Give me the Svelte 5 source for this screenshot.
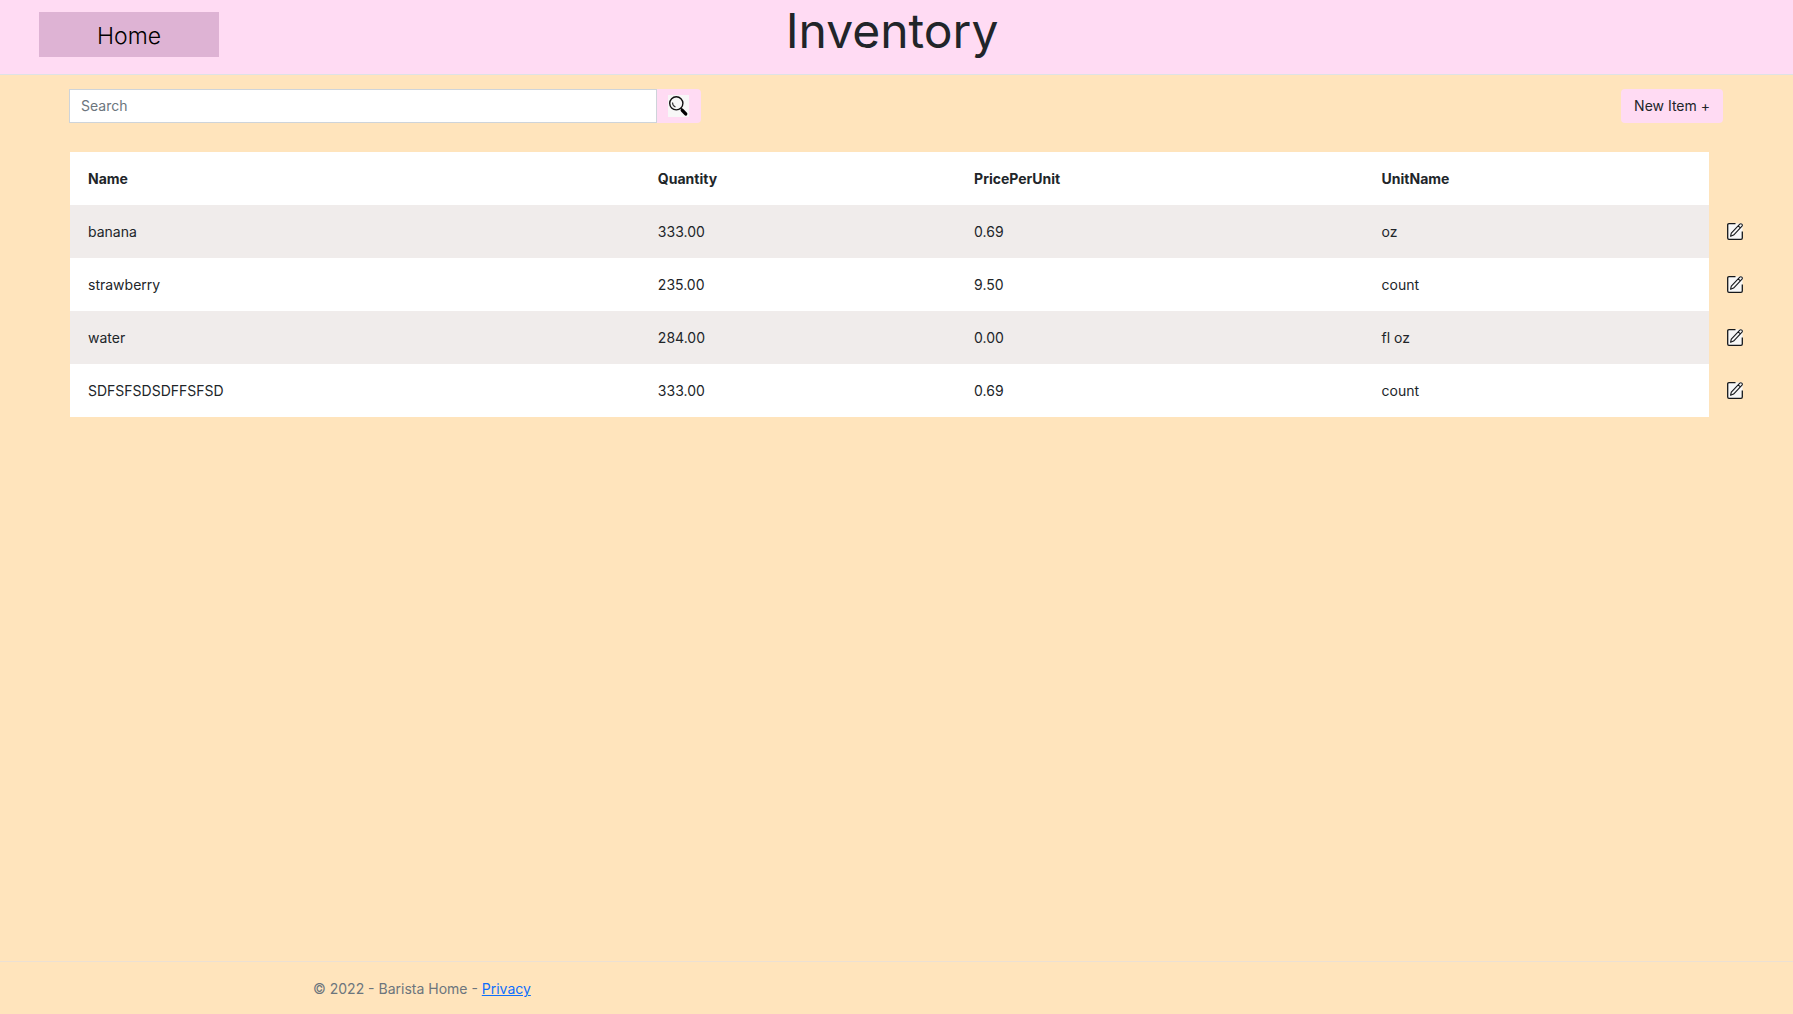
<script>
  let query = $state('');

  const items = [
    { name: 'banana', quantity: '333.00', price: '0.69', unit: 'oz' },
    { name: 'strawberry', quantity: '235.00', price: '9.50', unit: 'count' },
    { name: 'water', quantity: '284.00', price: '0.00', unit: 'fl oz' },
    { name: 'SDFSFSDSDFFSFSD', quantity: '333.00', price: '0.69', unit: 'count' }
  ];
</script>

<div class="page">
  <header>
    <a class="home" href="#home">Home</a>
    <h1>Inventory</h1>
  </header>

  <main>
    <div class="toolbar">
      <form class="search" onsubmit={(e) => e.preventDefault()}>
        <input type="text" placeholder="Search" aria-label="Search" bind:value={query} />
        <button type="submit" aria-label="Run search">
          <svg width="21" height="22" viewBox="0 0 21 22" aria-hidden="true">
            <rect width="21" height="22" fill="#f7f7f7" />
            <circle cx="8.3" cy="8.3" r="6.6" fill="none" stroke="#111" stroke-width="1.4" />
            <path d="M4.5 7.6q0 3.3 3 4.5" fill="none" stroke="#333" stroke-width="1.1" />
            <path d="M12.5 13l2 2" stroke="#111" stroke-width="1.6" />
            <path d="M14.3 15.3l3.4 3.6" stroke="#000" stroke-width="3.4" stroke-linecap="round" />
          </svg>
        </button>
      </form>
      <button type="button" class="new">New Item +</button>
    </div>

    <table>
      <colgroup>
        <col class="c-name" />
        <col class="c-quantity" />
        <col class="c-price" />
        <col />
        <col class="c-edit" />
      </colgroup>
      <thead>
        <tr>
          <th scope="col">Name</th>
          <th scope="col">Quantity</th>
          <th scope="col">PricePerUnit</th>
          <th scope="col">UnitName</th>
          <td class="edit"></td>
        </tr>
      </thead>
      <tbody>
        {#each items as item}
          <tr>
            <td>{item.name}</td>
            <td>{item.quantity}</td>
            <td>{item.price}</td>
            <td>{item.unit}</td>
            <td class="edit">
              <button type="button" aria-label="Edit {item.name}">
                <svg width="16" height="17" viewBox="0 0 16 17" aria-hidden="true">
                  <rect x="0.5" y="0.5" width="15" height="16" rx="1" fill="#f7f7f7" />
                  <path d="M8.5.7H2Q.7.7.7 2v13q0 1.3 1.3 1.3h12q1.3 0 1.3-1.3V8.5" fill="none" stroke="#16181b" stroke-width="1.3" />
                  <path d="M3.6 13.2l.7-3.1 8.5-9q1-.8 2 0t.2 2L6.6 12.1zM11.2 2.8l2.2 2" fill="#f7f7f7" stroke="#16181b" stroke-width="1.1" stroke-linejoin="round" />
                </svg>
              </button>
            </td>
          </tr>
        {/each}
      </tbody>
    </table>
  </main>

  <footer>&copy; 2022 - Barista Home - <a href="#privacy">Privacy</a></footer>
</div>

<style>
  :global(body) {
    margin: 0;
    background: #ffe4bc;
  }
  .page,
  .page * {
    box-sizing: border-box;
  }
  .page {
    display: flex;
    flex-direction: column;
    min-height: 100vh;
    overflow-x: hidden;
    color: #212529;
    font: 400 14px/21px Inter, sans-serif;
  }
  button,
  input {
    font: inherit;
    color: inherit;
  }
  button {
    border: 0;
    cursor: pointer;
  }
  svg {
    display: block;
  }
  header {
    display: grid;
    grid-template-columns: 180px 1fr 180px;
    align-items: start;
    min-height: 75px;
    padding: 0 48px 0 39px;
    background: #ffdbf3;
    border-bottom: 1px solid #dee2e6;
  }
  .home {
    margin-top: 12px;
    padding-top: 4px;
    background: #deb3d4;
    color: #000;
    font-size: 23px;
    font-weight: 300;
    line-height: 41px;
    text-align: center;
    text-decoration: none;
  }
  h1 {
    margin: 2px 0 0;
    font-size: 48px;
    font-weight: 400;
    line-height: 58px;
    text-align: center;
  }
  main {
    flex: 1;
    padding: 14px 32px 0 69px;
  }
  .toolbar {
    display: flex;
    justify-content: space-between;
    margin: 0 38px 29px 0;
  }
  .search {
    display: flex;
    width: 38.2%;
  }
  input {
    flex: 1;
    min-width: 0;
    height: 34px;
    padding: 0 11px 1px;
    background: #fff;
    border: 1px solid #ced4da;
    border-radius: 0;
  }
  input::placeholder {
    color: #6c757d;
    opacity: 1;
  }
  .search button {
    padding: 6px 12px 6px 11px;
    background: #ffdbf3;
    border-radius: 0 4px 4px 0;
  }
  .new {
    height: 34px;
    padding: 0 13px 1px;
    background: #ffdbf3;
    border-radius: 4px;
  }
  table {
    width: calc(100% - 1px);
    margin-left: 1px;
    table-layout: fixed;
    border-collapse: collapse;
  }
  .c-name {
    width: 33.7%;
  }
  .c-quantity {
    width: 18.7%;
  }
  .c-price {
    width: 24.1%;
  }
  .c-edit {
    width: 52px;
  }
  th,
  td {
    height: 53px;
    padding: 0 18px;
    text-align: left;
    background: #fff;
  }
  th {
    font-weight: 700;
  }
  tbody tr:nth-child(odd) td {
    background: #f0eceb;
  }
  td.edit,
  tbody tr:nth-child(odd) td.edit {
    background: transparent;
  }
  .edit button {
    display: block;
    padding: 0;
    background: none;
  }
  footer {
    padding: 16px 17% 15px 313px;
    border-top: 1px solid #ece0d3;
    color: #6c757d;
  }
  footer a {
    color: #0d6efd;
  }
</style>
